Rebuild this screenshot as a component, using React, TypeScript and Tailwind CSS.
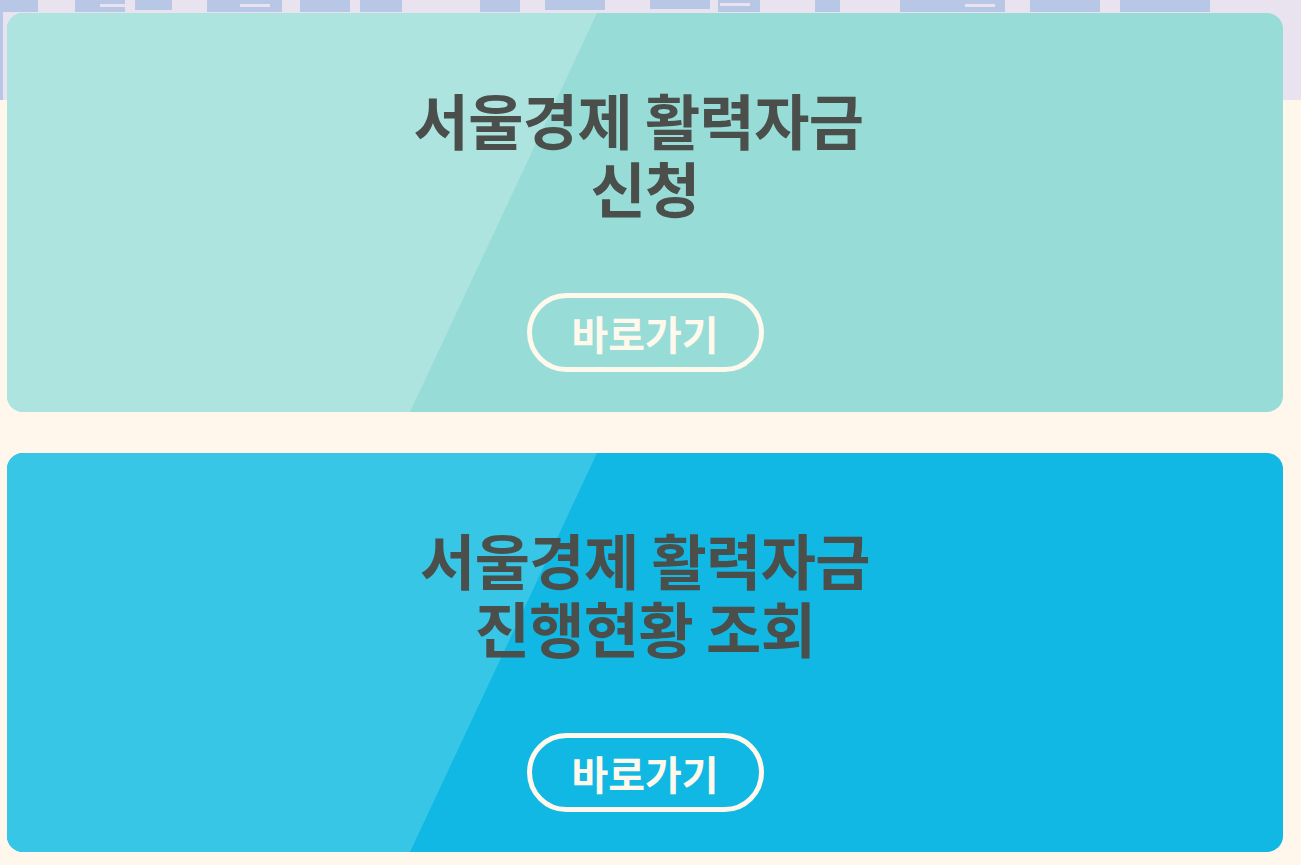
const blocks: [number, number, number][] = [
  [0, 38, 12],
  [75, 50, 12],
  [135, 37, 10],
  [207, 75, 12],
  [300, 50, 12],
  [360, 42, 12],
  [480, 40, 12],
  [545, 60, 10],
  [650, 60, 9],
  [718, 42, 12],
  [815, 25, 12],
  [900, 60, 12],
  [955, 50, 12],
  [1030, 70, 12],
  [1120, 90, 12],
];

function Band() {
  return (
    <div className="h-[100px] bg-[#e8e3ee] overflow-hidden">
      <svg width="1301" height="100" viewBox="0 0 1301 100" className="block">
        {blocks.map(([x, w, h], i) => (
          <rect key={i} x={x} y={0} width={w} height={h} fill="#b8c7e6" />
        ))}
        <rect x={0} y={0} width={3} height={100} fill="#b8c7e6" />
        <rect x={100} y={4} width={25} height={3} fill="#e8e3ee" />
        <rect x={240} y={4} width={30} height={3} fill="#e8e3ee" />
        <rect x={720} y={3} width={30} height={3} fill="#e8e3ee" />
        <rect x={965} y={4} width={30} height={3} fill="#e8e3ee" />
      </svg>
    </div>
  );
}

type CardProps = {
  lines: string[];
  light: string;
  dark: string;
};

function Card({ lines, light, dark }: CardProps) {
  return (
    <div
      className={`relative h-[399px] rounded-2xl overflow-hidden flex flex-col items-center pt-[72px] pb-[40px] ${dark}`}
    >
      <div
        className={`absolute inset-0 ${light} [clip-path:polygon(0_0,590px_0,403px_100%,0_100%)]`}
      />
      <h2 className="relative text-center text-[60px] leading-[68px] font-bold text-[#4a4f4c] tracking-[-0.01em]">
        {lines.map((l, i) => (
          <div key={i}>{l}</div>
        ))}
      </h2>
      <a
        href="#"
        className="relative mt-auto w-[237px] h-[79px] rounded-full border-[5px] border-[#fff8ec] flex items-center justify-center text-[40px] font-bold text-[#fff8ec]"
      >
        바로가기
      </a>
    </div>
  );
}

export default function App() {
  return (
    <div
      className="min-h-[865px] bg-[#fff6ec]"
      style={{ fontFamily: '"Noto Sans CJK KR", "Noto Sans", sans-serif' }}
    >
      <Band />
      <div className="relative -mt-[87px] px-[7px] pr-[18px] flex flex-col gap-[41px] pb-[13px]">
        <Card
          lines={["서울경제 활력자금\u00a0", "신청"]}
          light="bg-[#ade4df]"
          dark="bg-[#97dcd6]"
        />
        <Card
          lines={["서울경제 활력자금", "진행현황 조회"]}
          light="bg-[#38c6e6]"
          dark="bg-[#10b8e3]"
        />
      </div>
    </div>
  );
}
